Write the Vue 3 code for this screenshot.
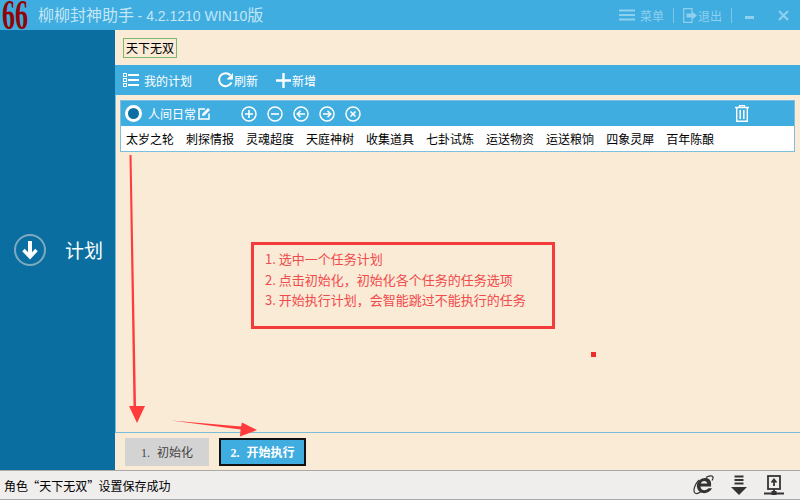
<template>
  <div class="app">
    <header class="titlebar">
      <div class="logo"><span>66</span></div>
      <div class="title">柳柳封神助手 <span class="title-ver">- 4.2.1210 WIN10</span>版</div>
      <div class="win-actions">
        <svg class="ico-menu" width="16" height="12" viewBox="0 0 16 12">
          <path d="M0 1.500h16M0 6h16M0 10.500h16" stroke="#8fd0ee" stroke-width="2.200" />
        </svg>
        <span class="win-text">菜单</span>
        <i class="sep"></i>
        <svg class="ico-exit" width="14" height="15" viewBox="0 0 14 15" fill="none">
          <path d="M9 3.500V.7H.7v13.600H9v-3" stroke="#8fd0ee" stroke-width="1.200" />
          <path d="M3.500 5.500h5V3L14 7.500 8.500 12V9.500h-5z" fill="#8fd0ee" />
        </svg>
        <span class="win-text">退出</span>
        <i class="sep"></i>
        <span class="minimize"></span>
        <svg class="ico-close" width="11" height="11" viewBox="0 0 11 11">
          <path d="M1 1l9 9M10 1l-9 9" stroke="#8fd0ee" stroke-width="2.200" />
        </svg>
      </div>
    </header>

    <div class="middle">
      <aside class="sidebar">
        <div class="nav-item">
          <svg width="32" height="32" viewBox="0 0 32 32" fill="none">
            <circle cx="16" cy="16" r="15" stroke="#7fa9bf" stroke-width="2" />
            <path d="M16 7v16" stroke="#fff" stroke-width="4" />
            <path d="M9.500 16l6.500 7 6.500-7" stroke="#fff" stroke-width="3.400" />
          </svg>
          <span class="nav-label">计划</span>
        </div>
      </aside>

      <main class="content">
        <div class="tag-row">
          <span class="role-tag">天下无双</span>
        </div>

        <div class="toolbar">
          <div class="tool tool-list">
            <svg width="16" height="14" viewBox="0 0 16 14" fill="none">
              <rect x="0.500" y="0.500" width="3" height="3" stroke="#fff" />
              <rect x="0.500" y="5.500" width="3" height="3" stroke="#fff" />
              <rect x="0.500" y="10.500" width="3" height="3" stroke="#fff" />
              <path d="M5 2h11M5 7h11M5 12h11" stroke="#fff" stroke-width="2" />
            </svg>
            <span>我的计划</span>
          </div>
          <div class="tool tool-refresh">
            <svg width="16" height="16" viewBox="0 0 16 16" fill="none">
              <path d="M13.500 10.500A6.500 6.500 0 1 1 12.400 3.200" stroke="#fff" stroke-width="2" />
              <path d="M15 1v6.500H8.500z" fill="#fff" />
            </svg>
            <span>刷新</span>
          </div>
          <div class="tool">
            <svg width="15" height="15" viewBox="0 0 15 15">
              <path d="M7.500 0v15M0 7.500h15" stroke="#fff" stroke-width="2.400" />
            </svg>
            <span>新增</span>
          </div>
        </div>

        <section class="plans">
          <div class="plan">
            <div class="plan-head">
              <span class="radio"></span>
              <span class="plan-name">人间日常</span>
              <svg class="ico-edit" width="13" height="13" viewBox="0 0 13 13" fill="none">
                <path d="M7 2H1v10h10V6.500" stroke="#fff" stroke-width="1.500" />
                <path d="M4.500 6.500L10 1l2 2-5.500 5.500-2.500.5z" fill="#fff" />
              </svg>
              <div class="round-btns">
                <svg v-for="b in roundButtons" :key="b" width="16" height="16" viewBox="0 0 16 16" fill="none">
                  <circle cx="8" cy="8" r="7" stroke="#fff" stroke-width="1.500" />
                  <path :d="b" stroke="#fff" stroke-width="1.600" />
                </svg>
              </div>
              <svg class="ico-trash" width="14" height="17" viewBox="0 0 14 17" fill="none">
                <path d="M0 2.500h14M4.500 2.500V.7h5v1.800" stroke="#fff" stroke-width="1.300" />
                <path d="M1.700 2.500v13.800h10.600V2.500" stroke="#fff" stroke-width="1.400" />
                <path d="M5.200 5v9M8.800 5v9" stroke="#fff" stroke-width="1.500" />
              </svg>
            </div>
            <div class="plan-tasks">
              <span v-for="t in tasks" :key="t">{{ t }}</span>
            </div>
          </div>
        </section>

        <div class="actions">
          <button class="btn-init"><span class="num">1.</span>初始化</button>
          <button class="btn-run"><span class="num">2.</span>开始执行</button>
        </div>
      </main>
    </div>

    <footer class="statusbar">
      <span class="status-text">角色 “天下无双” 设置保存成功</span>
      <div class="status-icons">
        <svg width="21" height="20" viewBox="0 0 21 20" fill="none">
          <path d="M17.500 11.500H7.500c0 4 5 5 8 1.800h3.500c-2.500 6-13 7.500-15-1 -1-6 5-10.500 10.500-9 3 1.200 4 4 3.500 8.200zM7.800 8.500h6.500c-.2-3.500-5.800-3.500-6.500 0z" fill="#333" fill-rule="evenodd" />
          <path d="M6 5C2 9 0 15 1.500 17.500c1.200 1.800 4 .8 6-.5M13 2.500c3-1.800 6.500-2.300 7-.5.300 1-.2 2.200-1 3.500" stroke="#333" stroke-width="1.200" />
        </svg>
        <svg width="16" height="20" viewBox="0 0 16 20">
          <path d="M3.500 1.500h9M3.500 5h9M3.500 8.500h9" stroke="#333" stroke-width="2" />
          <path d="M0 12h16l-8 8z" fill="#333" />
        </svg>
        <svg width="20" height="20" viewBox="0 0 20 20" fill="none">
          <rect x="4" y="1" width="12" height="13" stroke="#333" stroke-width="1.800" />
          <path d="M10 11V5M7.500 7.500L10 4.500l2.500 3" stroke="#333" stroke-width="1.800" />
          <path d="M10 14v4M0 18.500h20" stroke="#333" stroke-width="1.800" />
          <rect x="7.500" y="16" width="5" height="4" fill="#333" />
        </svg>
      </div>
    </footer>

    <!-- red notes drawn on top of the screenshot -->
    <div class="note">
      <p>1. 选中一个任务计划</p>
      <p>2. 点击初始化，初始化各个任务的任务选项</p>
      <p>3. 开始执行计划，会智能跳过不能执行的任务</p>
    </div>
    <svg class="marks" width="800" height="500" viewBox="0 0 800 500">
      <path d="M129.500 155L131.500 155L136 406L145 406L137 423L129 406L133.500 406Z" fill="#ff3b3b" />
      <path d="M171 420.500L241 426.500L242 422.500L257 430L240 436.500L240.500 429.500Z" fill="#ff3b3b" />
      <rect x="591" y="352" width="5" height="5" fill="#ee2c2c" />
    </svg>
  </div>
</template>

<script setup>
const tasks = ['太岁之轮', '刺探情报', '灵魂超度', '天庭神树', '收集道具', '七卦试炼', '运送物资', '运送粮饷', '四象灵犀', '百年陈酿']

const roundButtons = [
  'M8 4v8M4 8h8',
  'M4 8h8',
  'M12 8H4.500M7.500 4.800L4.300 8l3.200 3.200',
  'M4 8h7.500M8.500 4.800L11.700 8l-3.200 3.200',
  'M5.500 5.500l5 5M10.500 5.500l-5 5',
]
</script>

<style scoped>
* {
  box-sizing: border-box;
}
.app {
  position: relative;
  width: 800px;
  height: 500px;
  overflow: hidden;
  display: flex;
  flex-direction: column;
  font-family: "Noto Sans CJK SC", "Liberation Sans", sans-serif;
  font-size: 12px;
  color: #000;
}
.titlebar {
  height: 30px;
  background: #3fade0;
  display: flex;
  align-items: center;
  flex: none;
}
.logo {
  width: 38px;
  height: 30px;
  flex: none;
  padding-left: 2px;
}
.logo span {
  display: block;
  width: 42px;
  font-family: "Liberation Serif", serif;
  font-weight: bold;
  font-size: 42px;
  line-height: 30px;
  color: #8f0505;
  transform: scaleX(0.62);
  transform-origin: left center;
}
.title {
  font-size: 16px;
  color: #c3e6f6;
  white-space: nowrap;
  margin-top: -2px;
}
.title-ver {
  font-family: "Liberation Sans", sans-serif;
  font-size: 14px;
}
.win-actions {
  margin-left: auto;
  display: flex;
  align-items: center;
  padding-right: 11px;
}
.win-text {
  font-size: 12px;
  color: #8fd0ee;
}
.ico-menu {
  margin-right: 5px;
}
.ico-exit {
  margin-right: 1px;
}
.sep {
  width: 1px;
  height: 15px;
  background: #7cc5e8;
  margin: 0 9px;
}
.minimize {
  width: 9px;
  height: 3px;
  margin: 4px 24px 0 4px;
  background: #8fd0ee;
}
.middle {
  flex: 1;
  display: flex;
  min-height: 0;
}
.sidebar {
  width: 115px;
  flex: none;
  background: #0a6fa0;
  display: flex;
  align-items: center;
}
.nav-item {
  display: flex;
  align-items: center;
  gap: 19px;
  padding-left: 14px;
  color: #fff;
  font-size: 19px;
}
.nav-label {
  margin-top: -2px;
}
.content {
  flex: 1;
  min-width: 0;
  background: #faebd7;
  display: flex;
  flex-direction: column;
}
.tag-row {
  height: 35px;
  flex: none;
  display: flex;
  align-items: center;
  padding: 0 8px;
}
.role-tag {
  border: 1px solid #7fb86a;
  height: 20px;
  line-height: 18px;
  padding: 0 2px;
}
.toolbar {
  height: 30px;
  flex: none;
  background: #3fade0;
  display: flex;
  align-items: center;
  padding-left: 8px;
  color: #fff;
  font-size: 12px;
}
.tool {
  display: flex;
  align-items: center;
}
.tool-list {
  gap: 5px;
  margin-right: 26px;
}
.tool-refresh {
  gap: 0;
  margin-right: 18px;
}
.tool:last-child {
  gap: 1px;
}
.plans {
  flex: 1;
  min-height: 0;
  border-left: 1px solid #7bbcd8;
  border-bottom: 1px solid #7bbcd8;
  padding: 5px 5px 0 4px;
}
.plan {
  border: 1px solid #7bc0e0;
}
.plan-head {
  height: 25px;
  background: #3fade0;
  display: flex;
  align-items: center;
  padding-left: 4px;
  color: #fff;
}
.radio {
  width: 17px;
  height: 17px;
  border-radius: 50%;
  background: #0a6fa0;
  border: 3px solid #fff;
  flex: none;
}
.plan-name {
  margin-left: 6px;
}
.ico-edit {
  margin-left: 2px;
}
.round-btns {
  display: flex;
  gap: 10px;
  margin-left: 30px;
}
.ico-trash {
  margin-left: auto;
  margin-right: 45px;
}
.plan-tasks {
  height: 25px;
  background: #fff;
  display: flex;
  align-items: center;
  gap: 12px;
  padding-left: 5px;
}
.actions {
  height: 37px;
  flex: none;
  display: flex;
  align-items: center;
  gap: 10px;
  padding: 0 0 0 10px;
}
.actions button {
  height: 28px;
  font-family: inherit;
  font-size: 12px;
  padding: 0;
  cursor: pointer;
}
.num {
  font-family: "Liberation Serif", serif;
  margin-right: 7px;
}
.btn-init {
  width: 84px;
  background: #d3d3d3;
  color: #444;
  border: none;
}
.btn-run {
  width: 87px;
  background: #3fade0;
  color: #fff;
  font-weight: bold;
  border: 2px solid #111;
}
.statusbar {
  height: 30px;
  flex: none;
  background: #f0eded;
  border-top: 1px solid #aaa;
  border-bottom: 1px solid #aaa;
  display: flex;
  align-items: center;
  padding-left: 4px;
}
.status-text {
  word-spacing: -3.5px;
}
.status-icons {
  margin-left: auto;
  display: flex;
  align-items: center;
  gap: 17px;
  padding-right: 16px;
}
.note {
  position: absolute;
  left: 251px;
  top: 242px;
  width: 304px;
  height: 87px;
  border: 3px solid #f33b3b;
  padding: 4px 0 0 11px;
  color: #f04a4a;
  font-size: 13px;
  line-height: 20.5px;
}
.note p {
  margin: 0;
  white-space: nowrap;
}
.marks {
  position: absolute;
  left: 0;
  top: 0;
  pointer-events: none;
}
</style>
